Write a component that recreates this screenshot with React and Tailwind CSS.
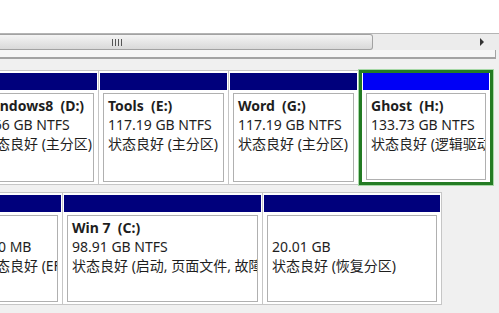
const FONT = "font-['Noto_Sans','Noto_Sans_CJK_SC',sans-serif]";

const Partition = ({ width, name, size, status, selected }) => {
  return (
    <div
      className={`${width} h-full flex flex-col shrink-0 bg-white ${
        selected
          ? "border-[3px] border-[#237b23] shadow-[0_0_0_1px_#a6d8a6] px-px pb-px"
          : "border border-l-0 border-[#c6c6c6] pt-[2px] px-px pb-px"
      }`}
    >
      {/* colour bar */}
      <div
        className={`h-[17px] shrink-0 ${
          selected ? "bg-[#0000f6]" : "bg-[#00007c]"
        }`}
      />
      <div className="flex-1 flex min-h-0 p-[3px] pb-px">
        <div className="flex-1 min-w-0 border border-[#b0b0b0] bg-white pl-[4px] pt-[2px] overflow-hidden whitespace-pre text-[14px] leading-[19px] text-[#1e1e1e]">
          <p className="font-bold h-[19px]">{name}</p>
          <p>{size}</p>
          <p>{status}</p>
        </div>
      </div>
    </div>
  );
};

export default function App() {
  return (
    <div
      className={`w-[499px] h-[313px] overflow-hidden bg-[#f0f0f0] flex flex-col ${FONT}`}
    >
      {/* top empty pane */}
      <div className="h-[33px] shrink-0 bg-white" />

      {/* horizontal scrollbar */}
      <div className="h-[17px] shrink-0 flex bg-[#ececec] border-t border-[#b4b4b4]">
        <div className="w-[373px] h-full flex items-center rounded-r-[3px] border border-l-0 border-[#a2a2a2] bg-gradient-to-b from-[#f4f4f4] to-[#d9d9d9]">
          <div className="ml-[112px] flex gap-[2px]">
            <span className="w-px h-[7px] bg-[#555]" />
            <span className="w-px h-[7px] bg-[#555]" />
            <span className="w-px h-[7px] bg-[#555]" />
            <span className="w-px h-[7px] bg-[#555]" />
          </div>
        </div>
        <div className="flex-1" />
        <div className="w-[24px] flex items-center justify-start pl-[5px]">
          <svg width="5" height="8" viewBox="0 0 5 8">
            <path d="M0 0L4 4L0 8Z" fill="#333" />
          </svg>
        </div>
      </div>

      {/* pane edge */}
      <div className="h-[9px] w-[496px] shrink-0 bg-[#f6f6f6] border-b-2 border-r border-[#a3a3a3]" />

      <div className="h-[11px] shrink-0" />

      {/* row 1 */}
      <div className="h-[115px] shrink-0 flex ml-[-27px]">
        <Partition
          width="w-[126px]"
          name="Windows8  (D:)"
          size="9.66 GB NTFS"
          status="状态良好 (主分区)"
        />
        <Partition
          width="w-[130px]"
          name="Tools  (E:)"
          size="117.19 GB NTFS"
          status="状态良好 (主分区)"
        />
        <Partition
          width="w-[130px]"
          name="Word  (G:)"
          size="117.19 GB NTFS"
          status="状态良好 (主分区)"
        />
        <Partition
          width="w-[134px]"
          name="Ghost  (H:)"
          size="133.73 GB NTFS"
          status="状态良好 (逻辑驱动器)"
          selected
        />
      </div>

      <div className="h-[7px] shrink-0" />

      {/* row 2 */}
      <div className="h-[113px] shrink-0 flex ml-[-27px]">
        <Partition
          width="w-[90px]"
          name=""
          size="100 MB"
          status="状态良好 (EFI 系统分区)"
        />
        <Partition
          width="w-[200px]"
          name="Win 7  (C:)"
          size="98.91 GB NTFS"
          status="状态良好 (启动, 页面文件, 故障转储, 主分区)"
        />
        <Partition
          width="w-[179px]"
          name=""
          size="20.01 GB"
          status="状态良好 (恢复分区)"
        />
      </div>
    </div>
  );
}
